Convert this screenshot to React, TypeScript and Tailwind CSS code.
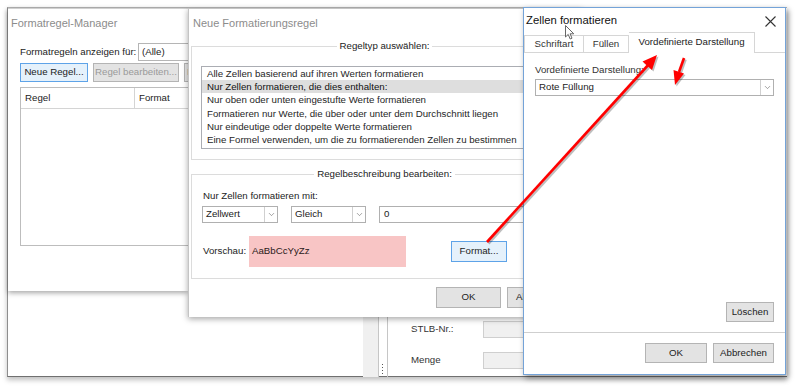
import React from "react";
import { ChevronDown } from "lucide-react";

function Btn({
  children,
  className = "",
  focus = false,
  disabled = false,
}: {
  children: React.ReactNode;
  className?: string;
  focus?: boolean;
  disabled?: boolean;
}) {
  return (
    <div
      className={
        "flex items-center justify-center border text-[9.7px] shrink-0 " +
        (focus ? "border-[#5ea3e8] bg-[#e5f1fb] " : "border-[#b4b4b4] bg-[#e3e3e3] ") +
        (disabled ? "text-[#9a9a9a] " : "text-[#222] ") +
        className
      }
    >
      {children}
    </div>
  );
}

function Select({ value, className = "" }: { value: string; className?: string }) {
  return (
    <div className={"flex h-[17px] border border-[#b0b0b0] bg-white shrink-0 " + className}>
      <div className="flex-1 flex items-center pl-[3px] text-[9.7px] text-[#222]">{value}</div>
      <div className="w-[13px] border-l border-[#d0d0d0] flex items-center justify-center text-[#666]">
        <ChevronDown size={9} strokeWidth={1.6} />
      </div>
    </div>
  );
}

const items = [
  "Alle Zellen basierend auf ihren Werten formatieren",
  "Nur Zellen formatieren, die dies enthalten:",
  "Nur oben oder unten eingestufte Werte formatieren",
  "Formatieren nur Werte, die über oder unter dem Durchschnitt liegen",
  "Nur eindeutige oder doppelte Werte formatieren",
  "Eine Formel verwenden, um die zu formatierenden Zellen zu bestimmen",
];

export default function App() {
  return (
    <div className="relative w-[798px] h-[388px] bg-white overflow-hidden font-['Liberation_Sans',Arial,sans-serif] text-[#262626]">
      {/* screenshot frame / background application */}
      <div className="absolute left-[7px] top-[7px] w-[780px] h-[370px] bg-white border-l border-t border-b border-l-[#8e8e8e] border-t-[#b4b4b4] border-b-[#707070] shadow-[0_3px_5px_rgba(0,0,0,0.25)]">
        <div className="absolute left-0 top-[170px] flex flex-col gap-[15px]">
          <div className="w-[2px] h-[6px] bg-[#8a6fa8]" />
          <div className="w-[2px] h-[5px] bg-[#8a6fa8]" />
          <div className="w-[2px] h-[5px] bg-[#8a6fa8] mt-[12px]" />
          <div className="w-[2px] h-[5px] bg-[#8a6fa8]" />
        </div>
        <div className="absolute left-[355px] top-[290px] h-[79px] w-[200px] flex">
          <div className="w-[16px] bg-[#f0f0f0]" />
          <div className="w-[11px] border-l border-r border-[#c6c6c6] flex flex-col items-center justify-end pb-[3px] gap-[2px]">
            <div className="w-[1px] h-[1px] bg-[#555]" />
            <div className="w-[1px] h-[1px] bg-[#555]" />
            <div className="w-[1px] h-[1px] bg-[#555]" />
            <div className="w-[1px] h-[1px] bg-[#555]" />
          </div>
          <div className="flex-1 pl-[23px] pt-[23px] flex flex-col gap-[14px]">
            <div className="flex items-center h-[17px]">
              <span className="w-[72px] text-[9.7px] text-[#333]">STLB-Nr.:</span>
              <div className="w-[80px] h-[17px] bg-[#f0f0f0] border border-[#cfcfcf]" />
            </div>
            <div className="flex items-center h-[17px]">
              <span className="w-[72px] text-[9.7px] text-[#333]">Menge</span>
              <div className="w-[80px] h-[17px] bg-[#f0f0f0] border border-[#cfcfcf]" />
            </div>
          </div>
        </div>
      </div>

      {/* Formatregel-Manager */}
      <div className="absolute left-[8px] top-[8px] w-[180px] h-[283px] bg-white border-t border-[#d0d0d0] shadow-[0_2px_5px_rgba(0,0,0,0.35)] flex flex-col overflow-hidden">
        <div className="h-[28px] flex items-center pl-[3px] text-[11px] text-[#8c8c8c]">Formatregel-Manager</div>
        <div className="mt-[6px] ml-[12px] flex items-center h-[18px]">
          <span className="w-[118px] shrink-0 text-[9.7px] text-[#222]">Formatregeln anzeigen für:</span>
          <div className="w-[80px] shrink-0 h-[18px] border border-[#b5b5b5] flex items-center pl-[3px] text-[9.7px] text-[#222]">(Alle)</div>
        </div>
        <div className="mt-[2px] ml-[12px] flex gap-[5px] h-[19px]">
          <Btn focus className="w-[68px]">Neue Regel...</Btn>
          <Btn disabled className="w-[86px]">Regel bearbeiten...</Btn>
          <Btn disabled className="w-[80px] !justify-start pl-[2px]">Regel löschen</Btn>
        </div>
        <div className="mt-[5px] ml-[12px] w-[200px] shrink-0 h-[159px] border border-[#bdbdbd]">
          <div className="flex h-[21px] border-b border-[#d4d4d4] text-[9.7px] text-[#222]">
            <div className="w-[114px] border-r border-[#d4d4d4] flex items-center pl-[4px]">Regel</div>
            <div className="flex items-center pl-[4px]">Format</div>
          </div>
        </div>
      </div>

      {/* Neue Formatierungsregel */}
      <div className="absolute left-[188px] top-[8px] w-[394px] h-[309px] bg-white border-l border-t border-[#c4c4c4] shadow-[0_2px_6px_rgba(0,0,0,0.35)] flex flex-col">
        <div className="h-[28px] flex items-center pl-[4px] text-[11px] text-[#8c8c8c]">Neue Formatierungsregel</div>
        <fieldset className="mt-[3px] ml-[2px] mr-[4px] border border-[#dcdcdc] pb-[10px]">
          <legend className="mx-auto px-[3px] leading-[12px] text-[9.7px] text-[#222]">Regeltyp auswählen:</legend>
          <div className="mt-[14px] mx-[9px] h-[83px] border border-[#abadb3] bg-white">
            {items.map((t, i) => (
              <div
                key={i}
                className={
                  "h-[13.2px] leading-[13px] overflow-hidden flex items-center pl-[5px] text-[9.7px] whitespace-nowrap " +
                  (i === 1 ? "bg-[#dedede] text-[#111]" : "text-[#262626]")
                }
              >
                {t}
              </div>
            ))}
          </div>
        </fieldset>
        <fieldset className="mt-[8px] ml-[2px] mr-[4px] border border-[#dcdcdc] pb-[11px]">
          <legend className="mx-auto px-[3px] leading-[12px] text-[9.7px] text-[#222]">Regelbeschreibung bearbeiten:</legend>
          <div className="mt-[10px] ml-[11px] h-[12px] flex items-center text-[9.7px] text-[#222]">Nur Zellen formatieren mit:</div>
          <div className="mt-[4px] ml-[10px] flex gap-[13px]">
            <Select value="Zellwert" className="w-[76px]" />
            <Select value="Gleich" className="w-[75px]" />
            <div className="w-[188px] h-[17px] border border-[#b0b0b0] flex items-center pl-[4px] text-[9.7px] text-[#222]">0</div>
          </div>
          <div className="mt-[13px] ml-[11px] flex items-center h-[31px]">
            <span className="w-[46px] text-[9.7px] text-[#222]">Vorschau:</span>
            <div className="w-[157px] h-[31px] bg-[#f8c5c5] flex items-center pl-[3px] text-[9.7px] text-[#2a1a1a]">AaBbCcYyZz</div>
            <Btn focus className="ml-[45px] w-[56px] h-[21px]">Format...</Btn>
          </div>
        </fieldset>
        <div className="mt-[8px] ml-[247px] flex gap-[6px]">
          <Btn className="w-[65px] h-[21px]">OK</Btn>
          <Btn className="w-[65px] h-[21px]">Abbrechen</Btn>
        </div>
      </div>

      {/* Zellen formatieren */}
      <div className="absolute left-[523px] top-[7px] w-[263px] h-[368px] bg-white border border-[#74a3d8] shadow-[2px_3px_6px_rgba(0,0,0,0.4)] flex flex-col">
        <div className="h-[24px] flex items-center justify-between pl-[2px] pr-[9px]">
          <span className="text-[11.3px] text-[#111]">Zellen formatieren</span>
          <svg width="11" height="11" viewBox="0 0 11 11" className="mt-[2px]">
            <path d="M0.5 0.5 L10.5 10.5 M10.5 0.5 L0.5 10.5" stroke="#333" strokeWidth="1.1" />
          </svg>
        </div>
        <div className="h-[21px] flex items-end">
          <div className="w-[60px] h-[18px] border border-[#d6d6d6] flex items-center justify-center text-[9.7px] text-[#333]">Schriftart</div>
          <div className="w-[45px] h-[18px] border border-l-0 border-[#d6d6d6] flex items-center justify-center text-[9.7px] text-[#333]">Füllen</div>
          <div className="w-[126px] h-[21px] border-t border-r border-[#d6d6d6] flex items-center justify-center text-[9.7px] text-[#222] pb-[1px]">Vordefinierte Darstellung</div>
          <div className="flex-1 h-full border-b border-[#d6d6d6]" />
        </div>
        <div className="flex-1 flex flex-col border-b border-[#cfcfcf] pb-[10px]">
          <div className="mt-[11px] ml-[11px] h-[12px] flex items-center text-[9.7px] text-[#333]">Vordefinierte Darstellung:</div>
          <Select value="Rote Füllung" className="mt-[3px] ml-[11px] mr-[11px] w-auto" />
          <Btn className="mt-auto self-end mr-[11px] w-[48px] h-[20px]">Löschen</Btn>
        </div>
        <div className="h-[41px] pt-[10px] flex justify-end gap-[6px] pr-[11px]">
          <Btn className="w-[62px] h-[20px]">OK</Btn>
          <Btn className="w-[61px] h-[20px]">Abbrechen</Btn>
        </div>
      </div>

      {/* mouse cursor */}
      <svg className="absolute left-[565px] top-[25px]" width="12" height="16" viewBox="0 0 12 16">
        <path d="M0.5 0.5 L0.5 12 L3.2 9.4 L5.2 14 L7 13.2 L5.1 8.8 L8.8 8.8 Z" fill="#fff" stroke="#666" strokeWidth="1" strokeLinejoin="round" />
      </svg>

      {/* red arrows */}
      <svg className="absolute left-0 top-0 pointer-events-none" width="798" height="388" viewBox="0 0 798 388">
        <g opacity="0.25" transform="translate(1.5 1.5)">
          <line x1="487" y1="242" x2="650" y2="63" stroke="#000" strokeWidth="2.6" />
          <polygon points="657,55 652,70 642.5,61.5" fill="#000" />
          <line x1="684" y1="58" x2="679" y2="72" stroke="#000" strokeWidth="2.6" />
          <polygon points="675,85 673.5,70 684,73.5" fill="#000" />
        </g>
        <line x1="487" y1="242" x2="650" y2="63" stroke="#ff0000" strokeWidth="2.6" />
        <polygon points="657,55 652,70 642.5,61.5" fill="#ff0000" />
        <line x1="684" y1="58" x2="679" y2="72" stroke="#ff0000" strokeWidth="2.6" />
        <polygon points="675,85 673.5,70 684,73.5" fill="#ff0000" />
      </svg>
    </div>
  );
}
